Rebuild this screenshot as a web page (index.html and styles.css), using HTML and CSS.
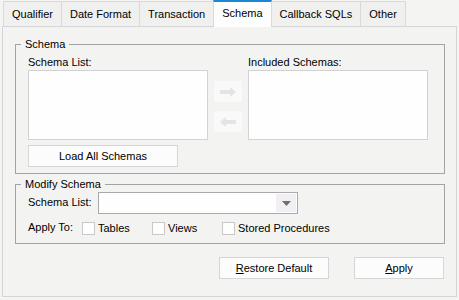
FILE: index.html
```html
<!DOCTYPE html>
<html>
<head>
<meta charset="utf-8">
<link rel="stylesheet" href="styles.css">
</head>
<body>
<div class="dialog">
  <div class="tabs">
    <div class="tab">Qualifier</div>
    <div class="tab">Date Format</div>
    <div class="tab">Transaction</div>
    <div class="tab active">Schema</div>
    <div class="tab">Callback SQLs</div>
    <div class="tab">Other</div>
  </div>
  <div class="panel">
    <fieldset class="group group-schema">
      <legend>Schema</legend>
      <div class="lists">
        <div class="col">
          <div class="label">Schema List:</div>
          <div class="listbox"></div>
        </div>
        <div class="arrows">
          <div class="arrow-btn">
            <svg width="16" height="10" viewBox="0 0 16 10"><path d="M0 3H10V0L16 5L10 10V7H0Z" fill="#e4e4e4"/></svg>
          </div>
          <div class="arrow-btn">
            <svg width="16" height="10" viewBox="0 0 16 10"><path d="M16 3H6V0L0 5L6 10V7H16Z" fill="#e4e4e4"/></svg>
          </div>
        </div>
        <div class="col">
          <div class="label">Included Schemas:</div>
          <div class="listbox"></div>
        </div>
      </div>
      <div class="btn btn-load">Load All Schemas</div>
    </fieldset>
    <fieldset class="group group-modify">
      <legend>Modify Schema</legend>
      <div class="row">
        <span class="label label-fixed">Schema List:</span>
        <div class="combo">
          <span class="combo-btn">
            <svg width="9" height="5" viewBox="0 0 9 5"><path d="M0 0H9L4.5 5Z" fill="#6e6e6e"/></svg>
          </span>
        </div>
      </div>
      <div class="row row-apply">
        <span class="label label-fixed">Apply To:</span>
        <span class="check check-tables"><span class="box"></span>Tables</span>
        <span class="check check-views"><span class="box"></span>Views</span>
        <span class="check"><span class="box"></span>Stored Procedures</span>
      </div>
    </fieldset>
    <div class="actions">
      <div class="btn btn-restore"><u>R</u>estore Default</div>
      <div class="btn btn-apply"><u>A</u>pply</div>
    </div>
  </div>
</div>
</body>
</html>
```
FILE: styles.css
```css
* { box-sizing: border-box; }
html, body {
  margin: 0;
  padding: 0;
  background: #f4f4f3;
}
body {
  font-family: "Liberation Sans", Arial, sans-serif;
  font-size: 11px;
  color: #000;
  width: 459px;
  height: 300px;
  overflow: hidden;
}
.dialog {
  padding-top: 1px;
}
.tabs {
  display: flex;
  padding-left: 3px;
  height: 25px;
  position: relative;
  z-index: 1;
}
.tab {
  height: 25px;
  line-height: 24px;
  padding: 0 8px;
  border: 1px solid #d9d9d9;
  border-bottom: 0;
  background: #f0f1ef;
  margin-right: -1px;
  white-space: nowrap;
}
.tab.active {
  margin-top: -1px;
  height: 27px;
  background: #fcfdfc;
  border-top: 2px solid #1c86d3;
  line-height: 23px;
  position: relative;
  z-index: 2;
}
.panel {
  margin-left: 2px;
  width: 455px;
  height: 271px;
  border: 1px solid #d5d5d5;
  background: #f3f4f2;
  padding: 11px 11px 0 12px;
}
.group {
  margin: 0;
  padding: 0 12px 5px 12px;
  border: 1px solid #a3a3a3;
  min-width: 0;
}
.group legend {
  padding: 0 4px;
  margin-left: -7px;
  line-height: 13px;
}
.group-schema {
  height: 136px;
}
.lists {
  display: flex;
  margin-top: 5px;
}
.col {
  width: 180px;
}
.label {
  line-height: 13px;
  height: 14px;
  white-space: nowrap;
}
.listbox {
  width: 180px;
  height: 70px;
  background: #fdfefd;
  border: 1px solid #d2d2d2;
}
.arrows {
  display: flex;
  flex-direction: column;
  gap: 9px;
  margin: 25px 6px 0 6px;
}
.arrow-btn {
  width: 28px;
  height: 21px;
  background: #f9f9f9;
  display: flex;
  align-items: center;
  justify-content: center;
}
.btn {
  height: 22px;
  line-height: 20px;
  border: 1px solid #d6d6d6;
  background: #fcfcfc;
  text-align: center;
  white-space: nowrap;
}
.btn-load {
  width: 150px;
  margin-top: 5px;
}
.group-modify {
  margin-top: 4px;
  height: 66px;
}
.row {
  display: flex;
  align-items: center;
}
.label-fixed {
  width: 70px;
}
.combo {
  width: 200px;
  height: 22px;
  border: 1px solid #a9a9a9;
  background: #fdfefd;
  display: flex;
  justify-content: flex-end;
  padding: 1px;
  margin-top: 1px;
}
.combo-btn {
  width: 20px;
  height: 100%;
  background: #f1eff4;
  display: flex;
  align-items: center;
  justify-content: center;
}
.row-apply {
  margin-top: 7px;
}
.label-fixed + .check { margin-left: -16px; }
.check {
  display: flex;
  align-items: center;
  white-space: nowrap;
}
.check-tables { width: 70px; }
.check-views { width: 70px; }
.box {
  width: 13px;
  height: 13px;
  border: 1px solid #c9c9c9;
  background: #fdfefd;
  margin-right: 3px;
}
.actions {
  display: flex;
  justify-content: flex-end;
  gap: 25px;
  margin-top: 13px;
  padding-right: 1px;
}
.btn-restore { width: 110px; }
.btn-apply { width: 90px; }
```
